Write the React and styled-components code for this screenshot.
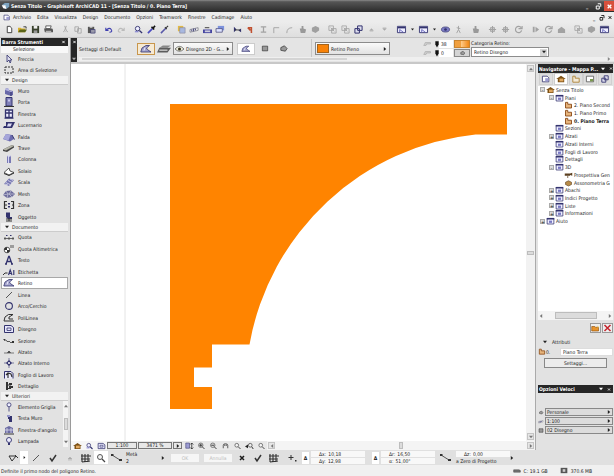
import React from 'react';
import styled, { createGlobalStyle, css } from 'styled-components';

const GlobalStyle = createGlobalStyle`
  * {
    box-sizing: border-box;
  }

  body {
    margin: 0;
    background: #e4e4e4;
    color: #1c1c1c;
    font-family: 'DejaVu Sans Condensed', 'DejaVu Sans', sans-serif;
    font-size: 5px;
    line-height: 8px;
  }

  button, input, select {
    font: inherit;
    color: inherit;
    margin: 0;
    padding: 0;
    border: 0;
    background: none;
    border-radius: 0;
    min-width: 0;
  }

  a {
    color: inherit;
    text-decoration: none;
  }

  svg {
    display: block;
    flex: none;
  }
`;

/* ---------- icons ---------- */

const N = '#33336e';
const L = '#9c9cd2';
const K = '#333';
const G = '#a2a2a2';

const glyphs = {
  arrow: <path d="M4 1v7l2-2 1 3 1-1-1-2h2z" fill="#dde" stroke={N} strokeWidth=".8" />,
  marquee: <path d="M2 2h8v6H2z" fill="none" stroke={K} strokeDasharray="2 1" />,
  wall: <g><path d="M2 3l3-1v2l5 1v4l-2 1-6-2z" fill="#6868a8" /><path d="M2 3l3-1 1 1v2l4 0-2 1-6-2z" fill="#b4b4e0" /><path d="M8 6v4" stroke={N} /></g>,
  door: <g><path d="M3 .5h6v8.500H3z" fill="#8080b8" stroke={N} /><path d="M5 2.500h2v2H5z" fill="#c8c8ee" /><path d="M1 9.500h10" stroke={K} /></g>,
  window: <g><path d="M2.500 1h7v7.500h-7zM6 1v7.500M2.500 4h7" fill="#eef" stroke={N} strokeWidth="1.300" /><path d="M1.500 9.200h9" stroke={N} /></g>,
  skylight: <g><path d="M3 2h9l-3 6H0l1-2h2z" fill={N} /><path d="M5 3.500h4L7.500 6.500H4z" fill="#dcdcf4" /></g>,
  roof: <g><path d="M0 7l3-5 6 1 2 4-4 2.500z" fill="#6c6cae" /><path d="M0 7l3-5 4.500 1-2 5.500z" fill="#a6a6da" /><path d="M9 3l2.500 4.500" stroke={N} /></g>,
  beam: <g><path d="M0 6.500l9-4.500 2 1v1.500L4 9 0 8z" fill="#444" /><path d="M0 6.500l9-4.500 2 1-8 4.500z" fill="#b4b4a8" /></g>,
  column: <g><path d="M4 1.500h4V9H4z" fill="#7878b4" /><path d="M5 2h1v7H5z" fill="#d4d4f4" /><ellipse cx="6" cy="1.700" rx="2" ry="1" fill="#dde" /></g>,
  slab: <g><path d="M1 6.500l5-4.500 1 3 4 1.500-5 2.500z" fill="#fff" stroke={K} strokeWidth=".8" /><path d="M1 7.500l5 2L11 7" fill="none" stroke={K} /></g>,
  stair: <g><path d="M1 7l5-5.500 5 1.500-5 6z" fill="#7474b0" /><path d="M3 5.500l4 2M5 3.500l4 2M2 7l3 1M7 2l3 1.500" stroke="#dde" strokeWidth=".8" /></g>,
  mesh: <g><path d="M0 6l3-4 5-.5 4 3.500L9 8 4 9z" fill="#6c6c9c" /><path d="M0 6l5-1 6 0M3 2l2 3-1 4M8 2L6 5l3 3" fill="none" stroke="#ccd" strokeWidth=".7" /></g>,
  zone: <g><path d="M4 1.500H1.500v7H4M8 1.500h2.500v7H8M1.500 5H4M10.500 5H9" fill="none" stroke={K} strokeWidth="1.200" /><path d="M5 3h2v1.500H5zM5 6h2v1.500H5z" fill={N} /></g>,
  object: <g><path d="M3 .5h4v4.500h2v2H5L3 5z" fill={N} /><path d="M3 7h6M6 7v2M3 9h6" stroke={K} /></g>,
  dimension: <g><path d="M1 6.500h10M2 5v3M6 5v3M10 5v3" stroke={K} strokeWidth=".7" /><path d="M3 3.500h2M7 3.500h2" stroke={N} strokeDasharray="1 .5" /></g>,
  level: <g><circle cx="4" cy="6" r="2.800" fill="#fff" stroke={K} strokeWidth=".8" /><path d="M4 3.200V6H1.200a2.800 2.800 0 012.800-2.800M4 8.800V6h2.800A2.800 2.800 0 014 8.800" fill={K} /><path d="M8 1v3M10 1v3" stroke={K} strokeWidth=".8" /></g>,
  text: <path d="M3 9l2.700-7.500h.6L9 9M4 6.500h4M2 9h2M8 9h2" fill="none" stroke={N} strokeWidth="1.300" />,
  label: <g><path d="M0 8l2-2h2.500" fill="none" stroke={K} /><path d="M5.500 8L7.200 3 9 8M6 6.500h2.400M10.800 3v5" fill="none" stroke={N} strokeWidth="1.100" /></g>,
  fill: <g><path d="M.8 8L2 4l4-2.500h3.500L6.500 4l.8 1.500L11 8z" fill="#a4a4cc" stroke={N} strokeWidth=".8" /><path d="M4 6.500l1-3" stroke="#eef" fill="none" /></g>,
  line: <path d="M3 8l6-6" stroke={K} strokeWidth=".8" />,
  circle: <circle cx="6" cy="5" r="3.400" fill="none" stroke={N} strokeWidth="1.100" />,
  polyline: <path d="M11 8H1l1-4 3.500-2.500H10L7 3.500 6 4v2h4" fill="none" stroke={K} strokeWidth="1" />,
  drawing: <g><path d="M1.500 1.500H8l2.500 2v5h-9z" fill="#e6e6fa" stroke={N} /><path d="M4 6.500V4h4v2.500z" fill="none" stroke={N} strokeWidth=".8" /></g>,
  section: <g><path d="M1 4h2l1 1.500h3M7 6.500h2" fill="none" stroke={K} strokeWidth=".8" /><path d="M0 3h2v2zM9 5h2v2H9z" fill={K} /></g>,
  elevation: <path d="M1 6h10M4.500 5.500L6 4l1.500 1.500z" stroke={K} fill={K} strokeWidth=".6" />,
  interior: <g><path d="M6 2l3 3-3 3-3-3z" fill={N} /><path d="M1 5h10M6 0v10" stroke={N} strokeWidth=".6" /><path d="M5 4h2v2H5z" fill="#ccd" /></g>,
  sheet: <g><path d="M1.500 8.500v-7H8l2 2v5" fill="#eef" stroke={N} /><path d="M3 5l2-2 3 1 1 3M5 3v5" fill="none" stroke={K} strokeWidth="1.200" /></g>,
  detail: <g><path d="M3 1h2v8H3zM6 2h3v2H6zM6 5h4v2H6z" fill={K} /><path d="M5 4h3M5 7.500h3" stroke={K} /></g>,
  gridItem: <g><circle cx="6" cy="2.800" r="2" fill="#eef" stroke={N} strokeWidth=".8" /><path d="M6 5v4.500" stroke={N} strokeWidth=".8" /></g>,
  wallEnd: <g><path d="M5 3h4v6H6V6H5z" fill={N} /><path d="M4 2h3v2H4z" fill="#99c" /></g>,
  cornerWin: <g><path d="M2 3l4-2 4 2v5H2z" fill="#6c6ca4" /><path d="M4 3v5M8 3v5M2 5h8" stroke="#dde" strokeWidth=".8" /><path d="M1 9h10" stroke={K} /></g>,
  lamp: <g><circle cx="6" cy="4" r="2.500" fill="#eef" stroke={N} strokeWidth=".9" /><path d="M5 7h2v2H5z" fill={N} /></g>,

  page: <path d="M3.500 1.500h3l2 2v5h-5z" fill="#fff" stroke={K} />,
  open: <g><path d="M1 8V3h3l1 1h4v4z" fill="#d8b030" /><path d="M1 8l2-3h8L9 8z" fill="#5a6418" /><path d="M7 2h3v2" stroke={K} fill="none" /></g>,
  save: <g><path d="M2 1h8v8H2z" fill="#38402c" /><path d="M4 1h4v3H4z" fill="#eee" /><path d="M4 6h4v3H4z" fill="#999" /></g>,
  print: <g><path d="M3 1h6l-1 3H3z" fill="#fff" stroke={K} strokeWidth=".8" /><path d="M1 4h9l1 1v3H2z" fill="#555" /><path d="M3 7h6" stroke="#ddd" /></g>,
  cut: <path d="M5 1l2 5M7 1L5 6M4 8a1 1 0 112-1M8 8a1 1 0 10-2-1" fill="none" stroke={G} strokeWidth=".9" />,
  copy: <path d="M2 2h4v5H2zM5 4h4v5H5z" fill="#e4e4e4" stroke={G} strokeWidth=".9" />,
  paste: <g><path d="M2 2h7v7H2z" fill="#555" /><path d="M4 1h3v2H4z" fill="#ddd" /><path d="M5 5h5v4H5z" fill="#99a" stroke={N} strokeWidth=".7" /></g>,
  undo: <path d="M3 3v3h3M3 6q4-4 6-1t-2 3" fill="none" stroke="#4040b0" strokeWidth="1.200" />,
  redo: <path d="M9 3v3H6M9 6Q5 2 3 5t2 3" fill="none" stroke="#bbb" strokeWidth="1.200" />,
  find: <g><circle cx="5" cy="4" r="2.500" fill="#eef" stroke={N} /><path d="M7 6l3 3" stroke={N} strokeWidth="1.500" /><path d="M2 7.500h4" stroke="#66c" /></g>,
  pick: <g><path d="M2 9l5-5" stroke="#4c4cc0" strokeWidth="1.800" /><path d="M6 2l3 3M8 3l2-2" stroke="#111" strokeWidth="1.800" /></g>,
  inject: <g><path d="M2 9l6-6" stroke="#5858a8" strokeWidth="1.700" /><path d="M6.500 2.500l2 2M8 3l2-2" stroke={K} strokeWidth="1.200" /></g>,
  layers: <g><path d="M2 1h6v6H2z" fill="#e0b848" /><path d="M4 3h6v6H4z" fill="#a8b8e0" stroke="#889" strokeWidth=".7" /></g>,
  measure: <g><path d="M1 5l9-2v3L1 8z" fill="#eee" stroke="#667" strokeWidth=".7" /><path d="M3 5v2M5 4v3M7 4v2" stroke={N} /></g>,
  panel: <g><path d="M1.500 1.500h9v7h-9z" fill="#eef" stroke={N} /><path d="M2 3h8" stroke={N} strokeWidth="1.500" /><path d="M4 5l4 3M4 5v3" stroke="#66b" /></g>,
  bars: <g><path d="M1 5h10v4H1z" fill="#4444a0" /><path d="M3 6h6v2H3z" fill="#ccd" /><path d="M3 3h5" stroke={K} /></g>,
  trace: <g><path d="M3 1h7v5H3z" fill="#7d92dc" /><path d="M1 4h7v4H1z" fill="#dfe4ff" stroke="#447" strokeWidth=".8" /></g>,
  trim: <g><path d="M2 2v6l3-3zM10 4v4L7 6z" fill={N} /><path d="M3 5.500h6" stroke={K} /></g>,
  corner: <path d="M3 3h4v6M3 3l3 3" fill="none" stroke="#c05030" strokeWidth="1.700" />,
  gBeam: <path d="M3 2h6M6 2v6M3 8h6" stroke={G} strokeWidth="1.400" />,
  gCorner: <path d="M3 9V3h6" fill="none" stroke={G} />,
  gArc: <path d="M3 9q0-6 6-6" fill="none" stroke={G} />,
  gHand: <path d="M3 4h2V1h2v3l3 1-1 4H4z" fill="#999" />,
  gBlob: <path d="M2 3l4-2 4 2v3L6 9 2 7z" fill="#a0a0a0" />,
  gCopy: <path d="M2 1h5v5H2zM5 4h5v5H5zM4 3l4 4" fill="none" stroke={G} strokeWidth=".9" />,
  stack: <path d="M2 4h5v5H2zM5 1h5v5H5z" fill="#dde" stroke={N} strokeWidth="1.100" />,
  restore: <path d="M3 5h4v4H3zM5 2h4v4" fill="none" stroke="currentColor" strokeWidth="1.300" />,
  up: <path d="M4 6l2-2 2 2zM4 7h4" fill="#aaa" stroke="#aaa" strokeWidth=".5" />,
  down: <path d="M4 4l2 2 2-2zM4 3h4" fill="#aaa" stroke="#aaa" strokeWidth=".5" />,
  eye: <g><ellipse cx="6" cy="5" rx="4.500" ry="2.800" fill="#7c7cc4" stroke={N} strokeWidth=".8" /><circle cx="6" cy="5" r="1.500" fill={N} /></g>,
  gWalk: <path d="M6 1v4l2 4M6 5L4 9M4 3l4 1" fill="none" stroke={G} />,
  gMove: <path d="M6 1v8M2 5h8M4 3h4v4H4z" fill="none" stroke={G} strokeWidth="1.200" />,
  gSpin: <path d="M9 3a3.500 3.500 0 10.500 3M6 4h4V1" fill="none" stroke={G} strokeWidth="1.300" />,
  gPlay: <path d="M3 2h2v6H3zM6 2l4 3-4 3z" fill={G} />,
  gHome: <path d="M2 5l4-3 4 3v4H2z" fill={G} />,
  close: <path d="M4 3l4 4M8 3L4 7" stroke="currentColor" strokeWidth="1.500" />,
  pent: <path d="M3 4l4-2 3 3-2 3-5-1z" fill="#999" stroke={K} strokeWidth=".8" />,
  square: <path d="M2 1.500h8v7H2z" fill="#999" stroke={K} />,
  view: <g><path d="M0 5q6-7 12 0Q6 11 0 5z" fill="#eed" stroke={K} strokeWidth=".8" /><circle cx="6" cy="5" r="2" fill="#342f18" /></g>,
  layerRow: <g><path d="M2 4l3-2h7l-3 2z" fill="#888" /><path d="M0 8l2-4h10L9 8z" fill="#5c5c5c" /><path d="M2 6h7" stroke="#ddd" /></g>,
  pen: <path d="M3.500 0h5v5L6 9.500 3.500 5z" fill="#111" />,
  poly: <path d="M1 7l2-4h7v2H5l-1 2z" fill="#ccc" stroke={G} strokeWidth=".7" />,
  house: <g><path d="M0 5l6-4 6 4h-2v4H2V5z" fill="#7c5014" /><path d="M4 4.500h5V8H4z" fill="#e0a860" /></g>,
  box: <g><path d="M1.500 1.500h9v7.500h-9z" fill="#eef" stroke={N} /><path d="M1 1h10v2H1z" fill={N} /><path d="M4 4.500h4v3H4z" fill="#7878c4" /></g>,
  folder: <path d="M2 1.500h3v2.500h5v5H2z" fill="#e6b47c" stroke="#8a4a16" strokeWidth="1.200" />,
  folderNew: <g><path d="M1 3h4l1 1h4v5H1z" fill="#e8952c" stroke="#864808" strokeWidth=".8" /><path d="M8 1l1 2 2 .5-2 1z" fill="#fc3" /></g>,
  camera: <g><path d="M1 3h7v3H1zM8 3l3-1v4L8 5z" fill="#5c4020" /><path d="M5 6v3" stroke="#5c4020" /></g>,
  axo: <path d="M2 4l4-2 4 2v3L6 9 2 7z" fill="#b88c48" stroke="#5c4020" strokeWidth=".8" />,
  book: <g><path d="M1.500 1.500h6l2 2v5h-8z" fill="#fff" stroke={N} /><path d="M5 4h4v4H5z" fill={L} /></g>,
  tabFolder: <path d="M2 1.500h3v2.500h5v5H2z" fill="#f4ead8" stroke="#b08840" strokeWidth="1.200" />,
  tabSheet: <g><path d="M1.500 1.500h9v7h-9z" fill="#fff" stroke="#555" /><path d="M6 5h4v3H6z" fill="#7a9a50" /></g>,
  cross: <path d="M2 1l8 8M10 1L2 9" stroke="#c4242c" strokeWidth="2" />,
  check: <path d="M3 5l2 3 4-6" fill="none" stroke={K} strokeWidth="1.500" />,
  nodeLine: <g><path d="M1 2l8 5" stroke={K} strokeWidth=".8" /><path d="M0 1h2.500v2H0zM8 6h3v2H8z" fill={K} /></g>,
  tri: <path d="M1 3h7L4 8zM7 2l3 3" fill="none" stroke={K} />,
  mesh2: <path d="M2 1v8M5 1v8M8 1v8M1 3h10M1 6h9M2 9l8-1" stroke={K} strokeWidth="1.100" />,
  lens: <g><circle cx="5" cy="4" r="2.500" fill="#f4f4f4" stroke="#555" /><path d="M7 6l3 3" stroke="#444" strokeWidth="1.300" /></g>,
  lensPlus: <g><circle cx="5" cy="4" r="3" fill="#ddd" stroke="#444" strokeWidth=".8" /><path d="M7 6l3 3M3 4h4M5 2v4" stroke="#333" strokeWidth="1.200" /></g>,
  lensMinus: <g><circle cx="5" cy="4" r="3" fill="#ddd" stroke="#444" strokeWidth=".8" /><path d="M7 6l3 3M3 4h4" stroke="#333" strokeWidth="1.200" /></g>,
  lensBack: <g><circle cx="7" cy="4" r="2.500" fill="#eee" stroke="#444" /><path d="M9 6l2 3" stroke="#333" strokeWidth="1.300" /><path d="M4 3L0 5.500 4 8z" fill="#222" /></g>,
  lensPage: <g><path d="M1 1h5v7H1z" fill={L} stroke={N} strokeWidth=".7" /><path d="M9 1v8M7 3l2-2 2 2M7 7l2 2 2-2" fill="none" stroke="#222" /></g>,
  hand: <path d="M3 8V4q0-2 3-2t3 2v4M5 3v2M7 3v2" fill="none" stroke={K} />,
  dots: <g><path d="M5 2v5M2.500 4.500h5" stroke={K} /><path d="M9 7h1.500v1.500H9z" fill={K} /></g>,
  disk: <path d="M1 4h8l2 1v2.500H1z" fill="#777" stroke={K} strokeWidth=".7" />,
  chip: <g><path d="M1 1h10v8H1z" fill="#555" /><path d="M4 3h4v4H4z" fill="#ccc" /></g>,
  app: <g><path d="M1 4l4-3h6v5L7 9 6 5z" fill="#7ea4c0" /><path d="M1 4h5l1 5-4-1z" fill="#fff" /></g>,
};

const Icon = ({ name, w = 12 }) => (
  <svg width={w} height={Math.round((w * 10) / 12)} viewBox="0 0 12 10" aria-hidden="true">
    {glyphs[name]}
  </svg>
);

const ArrowIcon = ({ dir = 'right', color = '#222', size = 4 }) => {
  const d = {
    right: 'M1 0l3 2.500L1 5z',
    left: 'M4 0L1 2.500 4 5z',
    down: 'M0 1h5L2.500 4z',
    up: 'M0 4h5L2.500 1z',
  }[dir];
  return (
    <svg width={size} height={size} viewBox="0 0 5 5" aria-hidden="true">
      <path d={d} fill={color} />
    </svg>
  );
};

/* ---------- frame ---------- */

const Window = styled.div`
  display: flex;
  flex-direction: column;
  height: 100vh;
  min-height: 440px;
  overflow: hidden;
  white-space: nowrap;
`;

const TitleBar = styled.header`
  display: flex;
  align-items: center;
  gap: 1px;
  height: 12px;
  padding-left: 1px;
  flex: none;
  color: #fff;
  background: linear-gradient(#8a8a8a, #555 15%, #444 50%, #2a2a2a);
`;

const Title = styled.h1`
  flex: 1;
  margin: 0;
  font-size: 5px;
  font-weight: bold;
`;

const WinButton = styled.button`
  display: grid;
  place-items: center;
  width: ${(p) => (p.$small ? 8 : 10)}px;
  height: ${(p) => (p.$small ? 7 : 10)}px;
  font-weight: bold;
  background: ${(p) => (p.$close ? '#d8503c' : 'transparent')};
  color: ${(p) => (p.$small ? '#111' : '#fff')};
`;

const MenuBar = styled.nav`
  display: flex;
  align-items: center;
  gap: 6px;
  height: 10px;
  padding-left: 13px;
  flex: none;
  background: #ececec;
`;

const MenuLogo = styled.span`
  margin-left: -10px;
  margin-right: -4px;
`;

const MenuEnd = styled.div`
  display: flex;
  margin-left: auto;
`;

const Toolbar = styled.div`
  display: flex;
  align-items: center;
  height: 16px;
  padding-left: 3px;
  flex: none;
  overflow: hidden;
  background: linear-gradient(#ececec, #dedede);
  border-bottom: 1px solid #c4c4c4;
`;

const ToolButton = styled.button`
  display: grid;
  place-items: center;
  width: 13px;
  height: 12px;
  flex: none;
`;

const MiniArrow = styled(ToolButton)`
  width: 9px;
`;

const ToolGap = styled.span`
  width: 4px;
  flex: none;
`;

const Workspace = styled.div`
  display: flex;
  flex: 1;
  min-height: 0;
`;

/* ---------- tool palette ---------- */

const Palette = styled.aside`
  display: flex;
  flex-direction: column;
  width: 71px;
  flex: none;
  padding: 0 2px 3px 1px;
  background: #e2e2e2;
  border-right: 1px solid #9a9a9a;
`;

const PanelHeader = styled.h2`
  display: flex;
  align-items: center;
  gap: 3px;
  height: ${(p) => p.$h || 8}px;
  margin: 0;
  padding: 0 1px;
  flex: none;
  font-size: 5px;
  color: #fff;
  background: #262626;

  span {
    flex: 1;
  }
`;

const PaletteMode = styled.div`
  height: 7px;
  padding-left: 12px;
  flex: none;
  line-height: 7px;
  background: #f8f8f8;
`;

const GroupTitle = styled.button`
  display: flex;
  align-items: center;
  gap: 3px;
  height: 9px;
  padding-left: 4px;
  flex: none;
  background: #f2f2f2;
  border-bottom: 1px solid #ccc;
`;

const ToolGroup = styled.div`
  display: flex;
  flex-direction: column;
  flex: ${(p) => p.$rows} 1 0;
  min-height: 0;
  position: relative;
`;

const Tool = styled.button`
  display: flex;
  align-items: center;
  gap: 3px;
  flex: 1 1 0;
  min-height: 0;
  padding-left: 2px;
  text-align: left;

  ${(p) =>
    p.$active &&
    css`
      background: #fff;
      outline: 1px solid #a8a8a8;
      outline-offset: -1px;
    `}
`;

const ListScroll = styled.div`
  position: absolute;
  top: 0;
  right: 0;
  bottom: 0;
  display: flex;
  flex-direction: column;
  align-items: center;
  justify-content: space-between;
  width: 5px;
  padding: 3px 0;
  background: #f4f4f4;
`;

const Thumb = styled.span`
  background: #dcdcdc;
  border: 1px solid #bdbdbd;
  width: ${(p) => p.$w}px;
  height: ${(p) => p.$h}px;
`;

/* ---------- info box ---------- */

const Main = styled.div`
  display: flex;
  flex-direction: column;
  flex: 1;
  min-width: 0;
`;

const InfoBox = styled.section`
  display: flex;
  height: 26px;
  flex: none;
  background: #e4e4e4;
  border-bottom: 2px solid #c8c8c8;
`;

const InfoHandle = styled.div`
  display: flex;
  flex-direction: column;
  align-items: center;
  justify-content: space-between;
  width: 6px;
  margin-right: 2px;
  padding: 1px 0;
  flex: none;
  color: #fff;
  background: #262626;
`;

const InfoBody = styled.div`
  display: flex;
  flex-direction: column;
  flex: 1;
  min-width: 0;
`;

const InfoRow = styled.div`
  display: flex;
  align-items: center;
  height: 19px;
  padding-top: 2px;
`;

const InfoScroll = styled.div`
  display: flex;
  align-items: center;
  justify-content: space-between;
  height: 4px;
  padding: 0 3px;
  background: #efefef;

  span {
    width: 265px;
    height: 2px;
    background: #d4d4d4;
  }
`;

const InfoLabel = styled.span`
  width: 58px;
  flex: none;
`;

const IconButton = styled.button`
  display: grid;
  place-items: center;
  width: ${(p) => p.$w || 18}px;
  height: 12px;
  flex: none;
  background: ${(p) => (p.$white ? '#fff' : p.$orange ? '#f6ead4' : 'transparent')};
  border: ${(p) => (p.$orange ? '1px solid #c8964c' : p.$white ? '1px solid #ccc' : '0')};
`;

const Popup = styled.button`
  display: flex;
  align-items: center;
  gap: 2px;
  width: ${(p) => p.$w}px;
  height: 13px;
  padding: 0 2px 0 1px;
  flex: none;
  background: linear-gradient(#fafafa, #e2e2e2);
  border: 1px solid #8c8c8c;

  span {
    flex: 1;
    text-align: left;
  }
`;

const Swatch = styled.i`
  width: 12px;
  height: 9px;
  background: #f88208;
  border: 1px solid #a4641c;
`;

const Divider = styled.i`
  width: 1px;
  height: 20px;
  margin: 0 3px 0 20px;
  background: #c6c6c6;
`;

const PenGrid = styled.div`
  display: grid;
  grid-template-columns: 9px 5px 14px 16px;
  grid-auto-rows: 8px;
  gap: 1px;
  margin-left: 33px;
  align-items: center;
`;

const PenInput = styled.input`
  width: 14px;
  height: 8px;
  padding-left: 2px;
  background: #fff;
`;

const PenButton = styled.button`
  display: grid;
  place-items: center;
  height: 8px;
  background: ${(p) => (p.$on ? 'linear-gradient(90deg, #f0a040 40%, #ffcf90 40%, #f08818)' : '#d4d4d4')};
  border: 1px solid ${(p) => (p.$on ? '#c88430' : '#888')};
`;

const Category = styled.label`
  display: flex;
  flex-direction: column;
  margin-left: 1px;
  line-height: 7px;
`;

const SelectBox = styled.span`
  display: flex;
  align-items: center;
  width: 78px;
  height: 10px;
  padding-right: 1px;
  background: #fff;
  border: 1px solid #8c8c8c;

  select {
    flex: 1;
    height: 8px;
    padding-left: 2px;
    appearance: none;
  }
`;

const SelectArrow = styled.i`
  display: grid;
  place-items: center;
  width: 7px;
  height: 7px;
  background: #d8d8d8;
`;

/* ---------- drawing area ---------- */

const Body = styled.div`
  display: flex;
  flex: 1;
  min-height: 0;
`;

const Viewport = styled.div`
  display: flex;
  flex-direction: column;
  flex: 1;
  min-width: 0;
`;

const CanvasRow = styled.div`
  display: flex;
  flex: 1;
  min-height: 0;
`;

const Canvas = styled.div`
  flex: 1;
  min-width: 0;
  background: #fff;

  svg {
    width: 100%;
    height: 100%;
  }
`;

const VScroll = styled.div`
  display: flex;
  flex-direction: column;
  align-items: center;
  justify-content: space-between;
  width: 9px;
  padding: 1px 0;
  background: #f2f2f2;
`;

const ScrollButton = styled.button`
  display: grid;
  place-items: center;
  width: 7px;
  height: 7px;
  background: #e6e6e6;
  border: 1px solid #c4c4c4;
`;

const ZoomBar = styled.div`
  display: flex;
  align-items: center;
  height: 9px;
  flex: none;
  background: #e8e8e8;
`;

const ZoomIcon = styled.button`
  display: grid;
  place-items: center;
  width: 12px;
  height: 9px;
  flex: none;
  background: ${(p) => (p.$raised ? '#f6f6f6' : 'transparent')};
`;

const ZoomValue = styled.button`
  display: grid;
  place-items: center;
  width: ${(p) => p.$w}px;
  height: 7px;
  margin-right: 1px;
  flex: none;
  line-height: 5px;
  background: #e8e8e8;
  border: 1px solid #777;
`;

const HScroll = styled.div`
  display: flex;
  align-items: center;
  justify-content: space-between;
  flex: 1;
  height: 9px;
  padding: 0 1px;
  background: #f4f4f4;
`;

/* ---------- navigator ---------- */

const SidePanel = styled.aside`
  display: flex;
  flex-direction: column;
  width: 79px;
  flex: none;
  padding: 0 1px 0 2px;
  background: #e2e2e2;
  border-left: 1px solid #aaa;
`;

const Tabs = styled.div`
  display: flex;
  justify-content: space-between;
  height: 13px;
  padding: 0 1px 1px;
  flex: none;
`;

const Tab = styled.button`
  display: grid;
  place-items: center;
  width: 14px;
  background: ${(p) => (p.$active ? '#fff' : '#dedede')};
  border: 1px solid ${(p) => (p.$active ? '#ccc' : '#d0d0d0')};
`;

const TreeBox = styled.div`
  flex: 1;
  min-height: 0;
  overflow: hidden;
  background: #fff;
`;

const Tree = styled.ul`
  display: grid;
  grid-auto-rows: 1fr;
  height: 139px;
  margin: 0;
  padding: 0 0 0 2px;
  list-style: none;
`;

const TreeItem = styled.li`
  display: flex;
  align-items: center;
  gap: 1px;
  min-height: 0;
  padding-left: ${(p) => p.$depth * 9}px;
  font-weight: ${(p) => (p.$bold ? 'bold' : 'normal')};
`;

const Toggle = styled.i`
  display: grid;
  place-items: center;
  width: 5px;
  height: 5px;
  flex: none;
  font-style: normal;
  line-height: 4px;
  ${(p) => p.$show && 'background: #ddd; border: 1px solid #aaa;'}
`;

const Actions = styled.div`
  display: flex;
  justify-content: flex-end;
  gap: 1px;
  padding: 3px 0 4px;

  button {
    display: grid;
    place-items: center;
    width: 11px;
    height: 10px;
    background: #eee;
    border: 1px solid #999;
  }
`;

const SubHead = styled.div`
  display: flex;
  align-items: center;
  gap: 5px;
  height: 10px;
  padding-left: 5px;
`;

const Field = styled.label`
  display: flex;
  align-items: center;
  height: 9px;

  span {
    width: 14px;
  }

  input {
    flex: 1;
    height: 8px;
    padding-left: 2px;
    background: #fff;
    border: 1px solid #ddd;
  }
`;

const WideButton = styled.button`
  height: 10px;
  margin: 2px 6px 17px;
  line-height: 7px;
  background: #ececec;
  border: 1px solid #888;
`;

const QuickList = styled.div`
  display: flex;
  flex-direction: column;
  gap: 1px;
  padding: 15px 0 16px;
`;

const QuickRow = styled.div`
  display: flex;
  align-items: center;
  gap: 1px;
  height: 8px;

  button {
    display: flex;
    align-items: center;
    justify-content: space-between;
    flex: 1;
    height: 8px;
    padding: 0 1px;
    background: #dcdcdc;
    border: 1px solid #888;
    line-height: 6px;
  }
`;

/* ---------- bottom bars ---------- */

const ControlBar = styled.div`
  display: flex;
  align-items: center;
  height: 15px;
  flex: none;
  padding-left: 8px;
  overflow: hidden;
  background: #e0e0e0;
`;

const ControlIcon = styled.button`
  display: grid;
  place-items: center;
  width: ${(p) => p.$w || 16}px;
  height: 13px;
  flex: none;
  background: ${(p) => (p.$on ? '#fff' : 'transparent')};
`;

const TwoLines = styled.div`
  width: ${(p) => p.$w}px;
  flex: none;
  line-height: 7px;
`;

const FlatButton = styled.button`
  width: 28px;
  height: 8px;
  margin-left: 3px;
  margin-right: 2px;
  flex: none;
  color: #bbb;
  background: #f6f6f6;
`;

const Coords = styled.div`
  display: flex;
  flex-direction: column;
  gap: 1px;
  width: 54px;
  margin-left: 2px;
  margin-right: ${(p) => p.$mr || 0}px;
  flex: none;
  line-height: 6px;

  label {
    display: flex;
    gap: 2px;
    height: 6px;
    padding-left: ${(p) => p.$indent || 8}px;
    background: #f8f8f8;
  }

  input {
    width: 26px;
    height: 6px;
  }
`;

const Anchor = styled.b`
  display: grid;
  place-items: center;
  width: 7px;
  height: 12px;
  flex: none;
  background: #fff;
`;

const StatusBar = styled.footer`
  display: flex;
  align-items: center;
  height: 11px;
  padding: 0 22px 0 1px;
  flex: none;
  background: #f0f0f0;

  p {
    flex: 1;
    margin: 0;
  }
`;

const StatusItem = styled.span`
  display: flex;
  align-items: center;
  gap: 3px;
  margin-left: 12px;
`;

/* ---------- data ---------- */

const menus = ['Archivio', 'Edita', 'Visualizza', 'Design', 'Documento', 'Opzioni', 'Teamwork', 'Finestre', 'Cadimage', 'Aiuto'];

const toolbar = [
  ['page', 'open', 'save', 'print'],
  ['cut', 'copy', 'paste'],
  ['undo', 'redo'],
  ['find', 'pick', 'inject'],
  ['layers', 'measure', 'bars', 'trace'],
  ['trim', 'corner', 'gBeam', 'gCorner', 'gArc', 'gHand', 'gBlob'],
  ['gCopy', 'gCopy', 'stack', 'up', 'down'],
  ['panel', '>', 'panel', '>', 'eye', 'gWalk'],
  ['gHand'],
  ['gMove', 'gMove', 'gSpin'],
  ['gPlay', 'gSpin', 'gHome'],
  ['gCopy', 'gBlob', 'panel'],
];

const selectionTools = [
  ['arrow', 'Freccia'],
  ['marquee', 'Area di Selezione'],
];

const toolGroups = [
  {
    title: 'Design',
    tools: [
      ['wall', 'Muro'],
      ['door', 'Porta'],
      ['window', 'Finestra'],
      ['skylight', 'Lucernario'],
      ['roof', 'Falda'],
      ['beam', 'Trave'],
      ['column', 'Colonna'],
      ['slab', 'Solaio'],
      ['stair', 'Scala'],
      ['mesh', 'Mesh'],
      ['zone', 'Zona'],
      ['object', 'Oggetto'],
    ],
  },
  {
    title: 'Documento',
    tools: [
      ['dimension', 'Quota'],
      ['level', 'Quota Altimetrica'],
      ['text', 'Testo'],
      ['label', 'Etichetta'],
      ['fill', 'Retino'],
      ['line', 'Linea'],
      ['circle', 'Arco/Cerchio'],
      ['polyline', 'PoliLinea'],
      ['drawing', 'Disegno'],
      ['section', 'Sezione'],
      ['elevation', 'Alzato'],
      ['interior', 'Alzato Interno'],
      ['sheet', 'Foglio di Lavoro'],
      ['detail', 'Dettaglio'],
    ],
  },
  {
    title: 'Ulteriori',
    scroll: true,
    tools: [
      ['gridItem', 'Elemento Griglia'],
      ['wallEnd', 'Testa Muro'],
      ['cornerWin', "Finestra-d'angolo"],
      ['lamp', 'Lampada'],
    ],
  },
];

const tree = [
  { d: 0, t: '-', icon: 'house', label: 'Senza Titolo' },
  { d: 1, t: '-', icon: 'box', label: 'Piani' },
  { d: 2, icon: 'folder', label: '2. Piano Second' },
  { d: 2, icon: 'folder', label: '1. Piano Primo' },
  { d: 2, icon: 'folder', label: '0. Piano Terra', bold: true },
  { d: 1, icon: 'box', label: 'Sezioni' },
  { d: 1, t: '+', icon: 'box', label: 'Alzati' },
  { d: 1, icon: 'box', label: 'Alzati Interni' },
  { d: 1, icon: 'box', label: 'Fogli di Lavoro' },
  { d: 1, icon: 'box', label: 'Dettagli' },
  { d: 1, t: '-', icon: 'box', label: '3D' },
  { d: 2, icon: 'camera', label: 'Prospettiva Gen' },
  { d: 2, icon: 'axo', label: 'Assonometria G' },
  { d: 1, t: '+', icon: 'box', label: 'Abachi' },
  { d: 1, t: '+', icon: 'box', label: 'Indici Progetto' },
  { d: 1, t: '+', icon: 'box', label: 'Liste' },
  { d: 1, t: '+', icon: 'box', label: 'Informazioni' },
  { d: 0, t: '+', icon: 'box', label: 'Aiuto' },
];

const quickOptions = [
  ['pent', 'Personale'],
  ['measure', '1:100'],
  ['square', '02 Disegno'],
];

const zoomTools = ['lensPage', 'lensPlus', 'lensMinus', 'hand', 'lens', 'lensBack', 'lens'];

/* ---------- components ---------- */

const ToolRow = ({ icon, label }) => (
  <Tool $active={label === 'Retino'}>
    <Icon name={icon} />
    {label}
  </Tool>
);

const ToolPalette = () => (
  <Palette>
    <PanelHeader>
      <span>Barra Strumenti</span>
      <Icon name="close" w={7} />
    </PanelHeader>
    <PaletteMode>Selezione</PaletteMode>
    <ToolGroup $rows={2}>
      {selectionTools.map(([icon, label]) => (
        <ToolRow key={label} icon={icon} label={label} />
      ))}
    </ToolGroup>
    {toolGroups.map((group) => (
      <React.Fragment key={group.title}>
        <GroupTitle>
          <ArrowIcon dir="down" />
          {group.title}
        </GroupTitle>
        <ToolGroup $rows={group.tools.length}>
          {group.tools.map(([icon, label]) => (
            <ToolRow key={label} icon={icon} label={label} />
          ))}
          {group.scroll && (
            <ListScroll>
              <ArrowIcon dir="up" color="#777" />
              <Thumb $w={4} $h={12} />
              <ArrowIcon dir="down" color="#777" />
            </ListScroll>
          )}
        </ToolGroup>
      </React.Fragment>
    ))}
  </Palette>
);

const Info = () => (
  <InfoBox>
    <InfoHandle>
      <Icon name="close" w={7} />
      <ArrowIcon dir="down" color="#aaa" />
    </InfoHandle>
    <InfoBody>
      <InfoRow>
        <InfoLabel>Settaggi di Default</InfoLabel>
        <IconButton $orange aria-label="Retino">
          <Icon name="fill" />
        </IconButton>
        <IconButton aria-label="Lucido">
          <Icon name="layerRow" w={14} />
        </IconButton>
        <Popup $w={60}>
          <Icon name="view" w={9} />
          <span>Disegno 2D - G...</span>
          <ArrowIcon />
        </Popup>
        <ToolGap />
        <IconButton $white aria-label="Poligono">
          <Icon name="fill" w={10} />
        </IconButton>
        <IconButton $w={20} aria-label="Rettangolo">
          <Icon name="square" w={8} />
        </IconButton>
        <IconButton $w={16} aria-label="Rettangolo ruotato">
          <Icon name="pent" w={11} />
        </IconButton>
        <Divider />
        <Popup $w={75}>
          <Swatch />
          <span>Retino Pieno</span>
          <ArrowIcon />
        </Popup>
        <PenGrid>
          <Icon name="poly" w={9} />
          <Icon name="pen" w={8} />
          <PenInput aria-label="Penna retino" defaultValue="38" />
          <PenButton $on aria-label="Colore penna" />
          <Icon name="poly" w={9} />
          <Icon name="pen" w={8} />
          <PenInput aria-label="Penna sfondo" defaultValue="0" />
          <PenButton aria-label="Colore sfondo">
            <Icon name="pent" w={7} />
          </PenButton>
        </PenGrid>
        <Category>
          Categoria Retino:
          <SelectBox>
            <select defaultValue="Retino Disegno">
              <option>Retino Disegno</option>
            </select>
            <SelectArrow>
              <ArrowIcon dir="down" />
            </SelectArrow>
          </SelectBox>
        </Category>
      </InfoRow>
      <InfoScroll>
        <span />
        <ArrowIcon color="#888" />
      </InfoScroll>
    </InfoBody>
  </InfoBox>
);

const Drawing = () => (
  <Canvas>
    <svg viewBox="71 64 454 377" preserveAspectRatio="xMidYMid meet" role="img" aria-label="Retino">
      <path d="M124.500 64v377" stroke="#e4e4e4" />
      <path
        d="M169.500 104H506.500V134.500H475A256 256 0 0 0 249 344.500H211.500V367.500H193.500V387H211.500V409H169.500Z"
        fill="#ff8400"
      />
    </svg>
  </Canvas>
);

const Navigator = () => (
  <SidePanel>
    <PanelHeader $h={9}>
      <span>Navigatore - Mappa P...</span>
      <ArrowIcon dir="down" color="#fff" />
      <Icon name="close" w={6} />
    </PanelHeader>
    <Tabs>
      {['book', 'house', 'tabFolder', 'tabSheet', 'stack'].map((icon) => (
        <Tab key={icon} $active={icon === 'house'} aria-label={icon}>
          <Icon name={icon} w={10} />
        </Tab>
      ))}
    </Tabs>
    <TreeBox>
      <Tree>
        {tree.map((item) => (
          <TreeItem key={item.label} $depth={item.d} $bold={item.bold}>
            <Toggle $show={!!item.t}>{item.t}</Toggle>
            <Icon name={item.icon} w={9} />
            {item.label}
          </TreeItem>
        ))}
      </Tree>
    </TreeBox>
    <ZoomBar>
      <HScroll>
        <ArrowIcon dir="left" color="#777" />
        <Thumb $w={42} $h={7} />
        <ArrowIcon color="#777" />
      </HScroll>
    </ZoomBar>
    <Actions>
      <button aria-label="Nuovo">
        <Icon name="folderNew" w={9} />
      </button>
      <button aria-label="Elimina">
        <Icon name="cross" w={9} />
      </button>
    </Actions>
    <SubHead>
      <ArrowIcon dir="down" />
      Attributi
    </SubHead>
    <Field>
      <Icon name="folder" w={8} />
      <span>0.</span>
      <input defaultValue="Piano Terra" />
    </Field>
    <WideButton>Settaggi...</WideButton>
    <PanelHeader>
      <span>Opzioni Veloci</span>
      <ArrowIcon dir="down" color="#fff" />
      <Icon name="close" w={6} />
    </PanelHeader>
    <QuickList>
      {quickOptions.map(([icon, label]) => (
        <QuickRow key={label}>
          <Icon name={icon} w={6} />
          <button>
            {label}
            <ArrowIcon />
          </button>
        </QuickRow>
      ))}
    </QuickList>
  </SidePanel>
);

const App = () => (
  <Window>
    <GlobalStyle />
    <TitleBar>
      <Icon name="app" w={9} />
      <Title>Senza Titolo - Graphisoft ArchiCAD 11 - [Senza Titolo / 0. Piano Terra]</Title>
      <WinButton aria-label="Riduci">_</WinButton>
      <WinButton aria-label="Ripristina">
        <Icon name="restore" w={9} />
      </WinButton>
      <WinButton $close aria-label="Chiudi">
        <Icon name="close" w={11} />
      </WinButton>
    </TitleBar>
    <MenuBar>
      <MenuLogo>
        <Icon name="book" w={8} />
      </MenuLogo>
      {menus.map((m) => (
        <a key={m} href={`#${m}`}>
          {m}
        </a>
      ))}
      <MenuEnd>
        <WinButton $small aria-label="Riduci">_</WinButton>
        <WinButton $small aria-label="Ripristina">
          <Icon name="restore" w={8} />
        </WinButton>
        <WinButton $small aria-label="Chiudi">
          <Icon name="close" w={8} />
        </WinButton>
      </MenuEnd>
    </MenuBar>
    <Toolbar>
      {toolbar.map((group, g) => (
        <React.Fragment key={g}>
          {g > 0 && <ToolGap />}
          {group.map((name, i) =>
            name === '>' ? (
              <MiniArrow key={i} aria-label="Altro">
                <ArrowIcon dir="down" size={3} />
              </MiniArrow>
            ) : (
              <ToolButton key={i} aria-label={name}>
                <Icon name={name} w={11} />
              </ToolButton>
            )
          )}
        </React.Fragment>
      ))}
    </Toolbar>
    <Workspace>
      <ToolPalette />
      <Main>
        <Info />
        <Body>
          <Viewport>
            <CanvasRow>
              <Drawing />
              <VScroll>
                <ScrollButton aria-label="Su">
                  <ArrowIcon dir="up" color="#777" />
                </ScrollButton>
                <Thumb $w={7} $h={4} />
                <ScrollButton aria-label="Giù">
                  <ArrowIcon dir="down" color="#777" />
                </ScrollButton>
              </VScroll>
            </CanvasRow>
            <ZoomBar>
              {['house', 'find', 'drawing'].map((name) => (
                <ZoomIcon key={name} $raised aria-label={name}>
                  <Icon name={name} w={9} />
                </ZoomIcon>
              ))}
              <ZoomValue $w={30}>1:100</ZoomValue>
              <ZoomValue $w={34}>3471 %</ZoomValue>
              <ZoomValue $w={9} aria-label="Zoom">
                <ArrowIcon />
              </ZoomValue>
              {zoomTools.map((name, i) => (
                <ZoomIcon key={i} aria-label={name}>
                  <Icon name={name} w={9} />
                </ZoomIcon>
              ))}
              <HScroll>
                <ScrollButton aria-label="Sinistra">
                  <ArrowIcon dir="left" color="#777" />
                </ScrollButton>
                <Thumb $w={4} $h={7} />
                <ScrollButton aria-label="Destra">
                  <ArrowIcon color="#777" />
                </ScrollButton>
              </HScroll>
            </ZoomBar>
          </Viewport>
          <Navigator />
        </Body>
      </Main>
    </Workspace>
    <ControlBar>
      <ControlIcon $w={12} aria-label="Piano">
        <Icon name="tri" />
      </ControlIcon>
      <ControlIcon $w={8} $on aria-label="Altro">
        <ArrowIcon size={3} />
      </ControlIcon>
      <ControlIcon aria-label="Linea">
        <Icon name="line" />
      </ControlIcon>
      <ControlIcon $w={18} aria-label="Vincolo">
        <Icon name="check" />
      </ControlIcon>
      <ControlIcon aria-label="Punto">
        <Icon name="up" />
      </ControlIcon>
      <ControlIcon aria-label="Griglia">
        <Icon name="mesh2" />
      </ControlIcon>
      <ControlIcon $w={14} $on aria-label="Bacchetta">
        <Icon name="lens" />
      </ControlIcon>
      <ControlIcon $w={18} aria-label="Snap">
        <Icon name="nodeLine" />
      </ControlIcon>
      <TwoLines $w={32}>
        Metà
        <br />2
      </TwoLines>
      <ControlIcon $w={10} aria-label="Altro">
        <ArrowIcon />
      </ControlIcon>
      <FlatButton disabled>OK</FlatButton>
      <FlatButton disabled>Annulla</FlatButton>
      <ControlIcon aria-label="Annulla">
        <Icon name="close" />
      </ControlIcon>
      <ControlIcon aria-label="Gravità">
        <Icon name="check" />
      </ControlIcon>
      <ControlIcon aria-label="Griglia">
        <Icon name="mesh2" />
      </ControlIcon>
      <ControlIcon $w={20} aria-label="Origine">
        <Icon name="dots" />
      </ControlIcon>
      <Anchor>Δ</Anchor>
      <Coords $mr={7}>
        <label>
          Δx: <input defaultValue="10,18" />
        </label>
        <label>
          Δy: <input defaultValue="12,98" />
        </label>
      </Coords>
      <Anchor>Δ</Anchor>
      <Coords $mr={3}>
        <label>
          Δr: <input defaultValue="16,50" />
        </label>
        <label>
          α: <input defaultValue="51,00°" />
        </label>
      </Coords>
      <ControlIcon aria-label="Elevazione">
        <Icon name="nodeLine" />
      </ControlIcon>
      <Coords>
        <label>
          Δz: <input defaultValue="0,00" />
        </label>
        <span>a Zero di Progetto</span>
      </Coords>
      <ArrowIcon />
    </ControlBar>
    <StatusBar>
      <p>Definite il primo nodo del poligono Retino.</p>
      <StatusItem>
        <Icon name="disk" w={8} />
        C: 19.1 GB
      </StatusItem>
      <StatusItem>
        <Icon name="chip" w={8} />
        370.6 MB
      </StatusItem>
    </StatusBar>
  </Window>
);

export default App;
